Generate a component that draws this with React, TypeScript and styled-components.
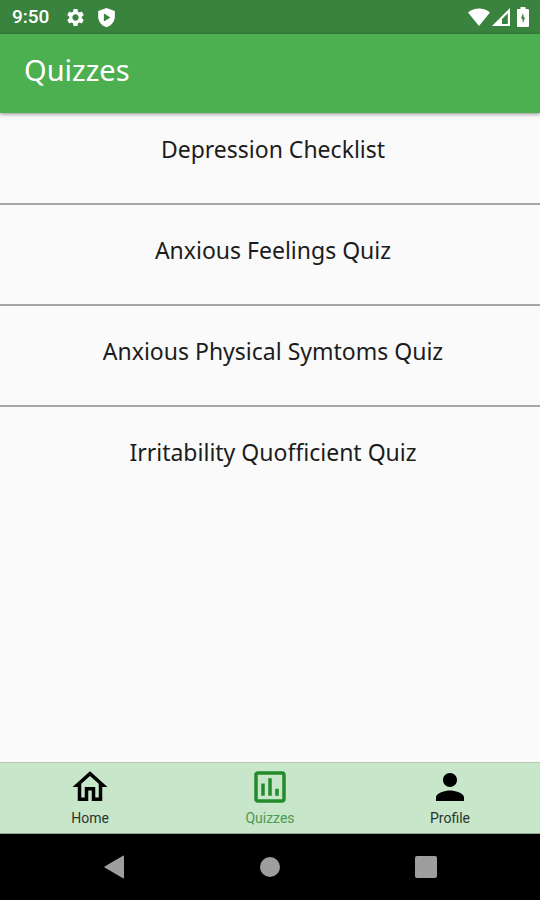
import React from "react";
import styled, { createGlobalStyle } from "styled-components";

const GlobalStyle = createGlobalStyle`
  *, *::before, *::after { box-sizing: border-box; }
  body { margin: 0; background: #fafafa; }
  button { font: inherit; color: inherit; background: none; border: 0; padding: 0; margin: 0; cursor: pointer; }
`;

const Screen = styled.div`
  display: flex;
  flex-direction: column;
  min-height: 100vh;
  background: #fafafa;
  color: #1c1c1c;
  font-family: "Noto Sans", sans-serif;
`;

const StatusBar = styled.div`
  display: flex;
  align-items: center;
  justify-content: space-between;
  height: 34px;
  padding: 0 8px 0 12px;
  background: #3a833e;
  color: #fff;
`;

const StatusGroup = styled.div<{ $gap: number }>`
  display: flex;
  align-items: center;
  gap: ${({ $gap }) => $gap}px;
`;

const Clock = styled.span`
  margin-right: 6px;
  font: 500 19px/24px Roboto, sans-serif;
`;

const AppBar = styled.header`
  display: flex;
  align-items: center;
  height: 79px;
  padding: 0 24px 8px;
  background: #4caf50;
  color: #fff;
  box-shadow: 0 1px 4px rgba(0, 0, 0, 0.45);
`;

const Title = styled.h1`
  margin: 0;
  font-size: 29px;
  font-weight: 400;
  line-height: 36px;
`;

const QuizList = styled.ul`
  flex: 1;
  margin: 0;
  padding: 0;
  list-style: none;
`;

const QuizItem = styled.li`
  border-bottom: 2px solid #a6a6a6;
  &:last-child { border-bottom: 0; }
`;

const QuizButton = styled.button<{ $first: boolean }>`
  display: block;
  width: 100%;
  padding: ${({ $first }) => ($first ? 21 : 30)}px 16px 39px 22px;
  text-align: center;
  && { font-size: 23px; line-height: 30px; }
`;

const TabBar = styled.nav`
  display: flex;
  height: 72px;
  border-top: 1px solid #b7cbb8;
  border-bottom: 1px solid #8da68f;
  background: #c8e6c9;
`;

const Tab = styled.button<{ $active: boolean }>`
  display: flex;
  flex: 1;
  flex-direction: column;
  align-items: center;
  padding-top: 3px;
  color: ${({ $active }) => ($active ? "#238b2b" : "#000")};
`;

const TabLabel = styled.span<{ $active: boolean }>`
  color: ${({ $active }) => ($active ? "#4b9a51" : "#2b352c")};
  font: 400 14px/20px Roboto, sans-serif;
`;

const SystemBar = styled.div`
  display: flex;
  height: 66px;
  padding: 0 36px;
  background: #000;
  color: #9e9e9e;
`;

const SystemButton = styled.button`
  display: flex;
  flex: 1;
  align-items: center;
  justify-content: center;
  && { color: #9e9e9e; }
`;

type IconProps = { d: string; size: number };

function Icon({ d, size }: IconProps) {
  return (
    <svg width={size} height={size} viewBox="0 0 24 24" fill="currentColor" aria-hidden="true">
      <path fillRule="evenodd" d={d} />
    </svg>
  );
}

const settingsPath =
  "M19.14 12.94c.04-.3.06-.61.06-.94 0-.32-.02-.64-.07-.94l2.03-1.58c.18-.14.23-.41.12-.61l-1.92-3.32c-.12-.22-.37-.29-.59-.22l-2.39.96c-.5-.38-1.03-.7-1.62-.94l-.36-2.54c-.04-.24-.24-.41-.48-.41h-3.84c-.24 0-.43.17-.47.41l-.36 2.54c-.59.24-1.13.57-1.62.94l-2.39-.96c-.22-.08-.47 0-.59.22L2.74 8.87c-.12.21-.08.47.12.61l2.03 1.58c-.05.3-.09.63-.09.94s.02.64.07.94l-2.03 1.58c-.18.14-.23.41-.12.61l1.92 3.32c.12.22.37.29.59.22l2.39-.96c.5.38 1.03.7 1.62.94l.36 2.54c.05.24.24.41.48.41h3.84c.24 0 .44-.17.47-.41l.36-2.54c.59-.24 1.13-.56 1.62-.94l2.39.96c.22.08.47 0 .59-.22l1.92-3.32c.12-.22.07-.47-.12-.61l-2.01-1.58zM12 15.6c-1.98 0-3.6-1.62-3.6-3.6s1.62-3.6 3.6-3.6 3.6 1.62 3.6 3.6-1.62 3.6-3.6 3.6z";
const shieldPath =
  "M12 1 2.500 4.500V11c0 5.500 4 10.400 9.500 12 5.500-1.600 9.500-6.500 9.500-12V4.500L12 1zM9 7.500l7.500 4.500L9 16.500z";

const tabs = [
  {
    label: "Home",
    d: "M12 5.690l5 4.500V18h-2v-6H9v6H7v-7.810l5-4.500M12 3 2 12h3v8h6v-6h2v6h6v-8h3L12 3z",
  },
  {
    label: "Quizzes",
    d: "M9 17H7v-7h2v7zm4 0h-2V7h2v10zm4 0h-2v-4h2v4zm2 2H5V5h14v14zm0-16H5c-1.100 0-2 .9-2 2v14c0 1.100.9 2 2 2h14c1.100 0 2-.9 2-2V5c0-1.100-.9-2-2-2z",
  },
  {
    label: "Profile",
    d: "M12 12c2.210 0 4-1.790 4-4s-1.790-4-4-4-4 1.790-4 4 1.790 4 4 4zm0 2c-2.670 0-8 1.340-8 4v2h16v-2c0-2.660-5.330-4-8-4z",
  },
];

const quizzes = [
  "Depression Checklist",
  "Anxious Feelings Quiz",
  "Anxious Physical Symtoms Quiz",
  "Irritability Quofficient Quiz",
];

export default function App() {
  const [active, setActive] = React.useState("Quizzes");
  return (
    <Screen>
      <GlobalStyle />
      <StatusBar>
        <StatusGroup $gap={10}>
          <Clock>9:50</Clock>
          <Icon d={settingsPath} size={21} />
          <Icon d={shieldPath} size={21} />
        </StatusGroup>
        <StatusGroup $gap={2}>
          <svg width="22" height="18" viewBox="0 0 22 18" fill="currentColor" aria-hidden="true">
            <path d="M0 4.500C6-1 16-1 22 4.500L11 18z" />
          </svg>
          <svg width="20" height="18" viewBox="0 0 20 18" fill="currentColor" aria-hidden="true">
            <path fillRule="evenodd" d="M0 18 18 0V18zM10 11V16H15.800V5.200z" />
          </svg>
          <svg width="18" height="20" viewBox="0 0 18 20" fill="currentColor" aria-hidden="true">
            <path
              fillRule="evenodd"
              d="M6.500 0h5v2H14q1 0 1 1v16q0 1-1 1H4q-1 0-1-1V3q0-1 1-1h2.500zM9 6 7 11.500h1.200L9 16l2-5.500H9.800z"
            />
          </svg>
        </StatusGroup>
      </StatusBar>
      <AppBar>
        <Title>Quizzes</Title>
      </AppBar>
      <QuizList>
        {quizzes.map((quiz, index) => (
          <QuizItem key={quiz}>
            <QuizButton type="button" $first={index === 0}>
              {quiz}
            </QuizButton>
          </QuizItem>
        ))}
      </QuizList>
      <TabBar aria-label="Main">
        {tabs.map(({ label, d }) => (
          <Tab
            key={label}
            type="button"
            $active={active === label}
            aria-current={active === label ? "page" : undefined}
            onClick={() => setActive(label)}
          >
            <Icon d={d} size={42} />
            <TabLabel $active={active === label}>{label}</TabLabel>
          </Tab>
        ))}
      </TabBar>
      <SystemBar>
        <SystemButton type="button" aria-label="Back">
          <svg width="20" height="24" viewBox="0 0 20 24" fill="currentColor">
            <path d="M19 .8Q20 .2 20 1.200V22.800Q20 23.800 19 23.200L.6 12.600Q0 12 .6 11.400z" />
          </svg>
        </SystemButton>
        <SystemButton type="button" aria-label="Home screen">
          <svg width="20" height="20" viewBox="0 0 20 20" fill="currentColor">
            <circle cx="10" cy="10" r="10" />
          </svg>
        </SystemButton>
        <SystemButton type="button" aria-label="Recent apps">
          <svg width="22" height="22" viewBox="0 0 22 22" fill="currentColor">
            <rect width="22" height="22" rx="2" />
          </svg>
        </SystemButton>
      </SystemBar>
    </Screen>
  );
}
